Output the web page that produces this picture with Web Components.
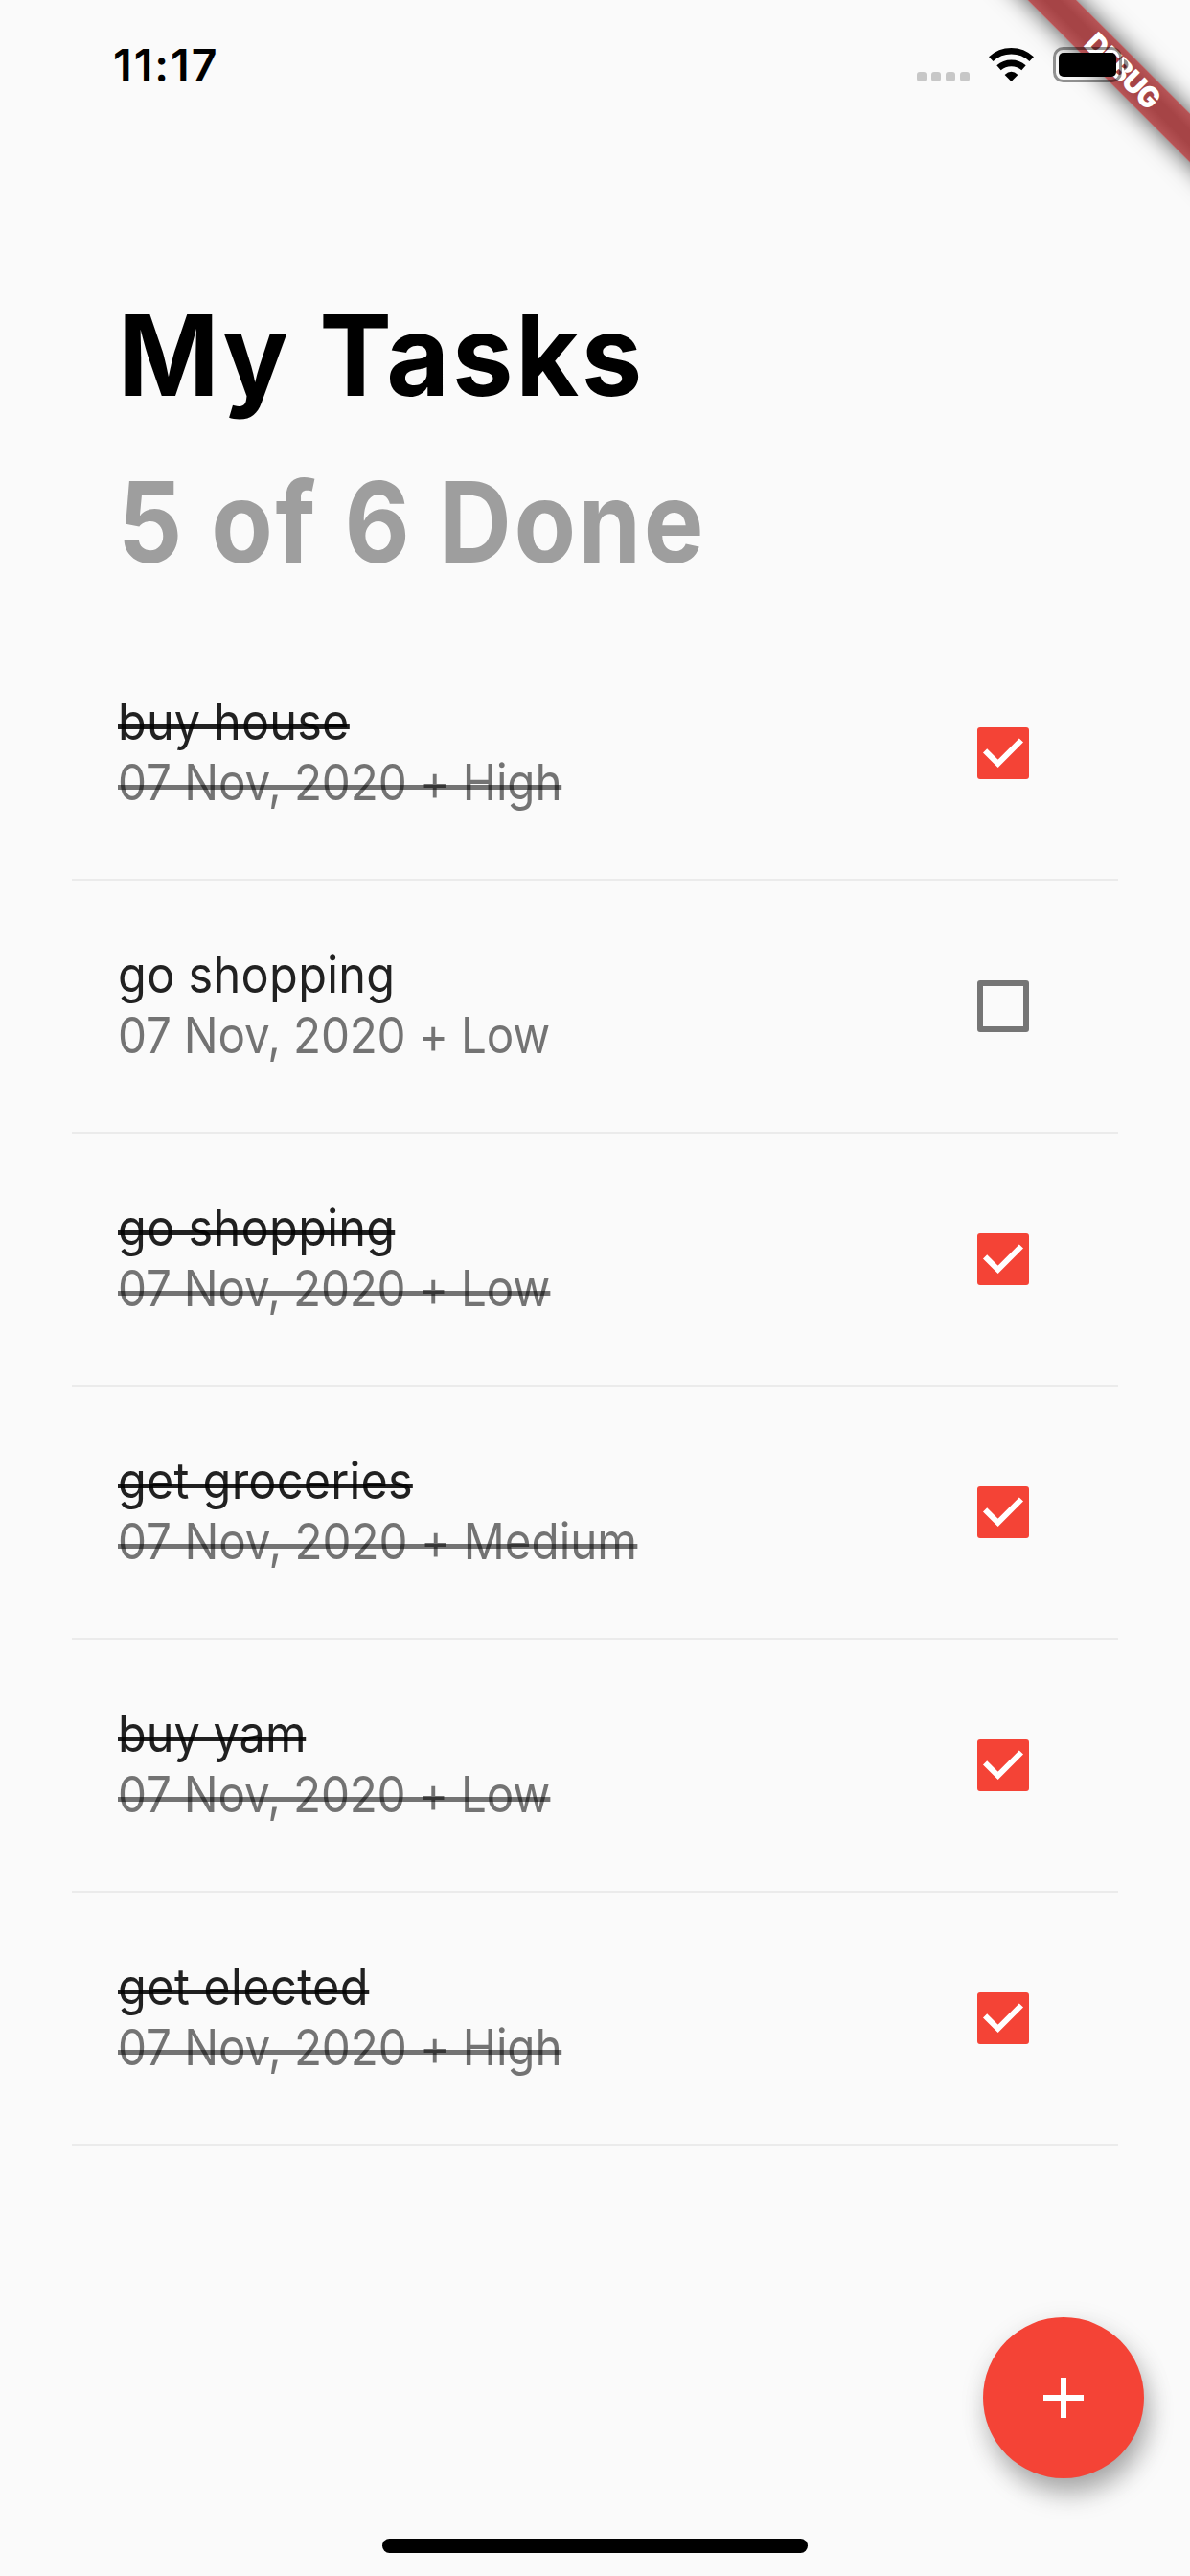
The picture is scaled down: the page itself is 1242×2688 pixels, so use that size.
<!DOCTYPE html>
<html lang="en">
<head>
<meta charset="utf-8">
<title>My Tasks</title>
<style>
html,body{margin:0;padding:0}
body{width:1242px;height:2688px;overflow:hidden;background:#fafafa;font-family:Inter,"Liberation Sans",sans-serif}
</style>
</head>
<body>
<tasks-app></tasks-app>
<script>
const define = (name, html, setup) => {
  const tpl = document.createElement('template');
  tpl.innerHTML = html;
  customElements.define(name, class extends HTMLElement {
    connectedCallback() {
      if (this.shadowRoot) return;
      this.attachShadow({ mode: 'open' }).append(tpl.content.cloneNode(true));
      if (setup) setup.call(this, this.shadowRoot);
    }
  });
};

/* One line of text, condensed by "squeeze" and tracked so that it spans the given advance width. */
define('fit-text', `
<style>
:host{display:block;white-space:nowrap}
span{display:inline-block;vertical-align:top;transform-origin:0 50%}
:host(.row) span{line-height:60px;padding-bottom:3px}
:host([struck]) span{background:linear-gradient(currentColor,currentColor) 0 33px/100% 5px no-repeat}
</style><span><slot></slot></span>`, function (root) {
  const span = root.querySelector('span');
  const squeeze = Number(this.getAttribute('squeeze') || 1);
  const want = Number(this.getAttribute('span')) / squeeze;
  const have = parseFloat(getComputedStyle(span).width);
  span.style.letterSpacing = ((want - have) / this.textContent.length) + 'px';
  if (squeeze !== 1) span.style.transform = 'scaleX(' + squeeze + ')';
});

define('status-bar', `
<style>
:host{display:flex;height:132px;box-sizing:border-box;align-items:flex-start;justify-content:space-between;padding:0 64px 0 118px}
.time{font-size:46.5px;font-weight:600;line-height:56px;padding-top:40px}
.icons{display:flex;padding-top:49px}
svg{display:block}
</style>
<fit-text class="time" span="110.500">11:17</fit-text>
<div class="icons">
<svg width="222" height="38" viewBox="0 0 222 38">
<g fill="#c7c7c7"><rect x="1" y="26" width="10" height="10" rx="3"/><rect x="16" y="26" width="10" height="10" rx="3"/><rect x="31" y="26" width="10" height="10" rx="3"/><rect x="46" y="26" width="10" height="10" rx="3"/></g>
<g fill="none" stroke="#000" stroke-width="6.6"><path d="M78.3 12.600A31 31 0 0 1 120.700 12.600"/><path d="M86.500 21.800A19.500 19.500 0 0 1 112.500 21.800"/></g>
<path d="M92.600 28.900Q99.500 22.700 106.400 28.900L99.500 36Z"/>
<rect x="144.500" y="1.500" width="69" height="34" rx="9" fill="none" stroke="#000" stroke-opacity=".42" stroke-width="3"/>
<path d="M217 12.500Q221.500 14.500 221.500 18.500T217 24.500Z" fill-opacity=".45"/>
<rect x="149" y="6" width="60" height="25" rx="5"/>
</svg></div>`);

define('task-heading', `
<style>
:host{display:block;padding:152px 0 0 123px;font-weight:650;font-size:117px;line-height:174px}
h1,p{margin:0;font:inherit;height:174px}
p{color:#9e9e9e}
</style>
<h1><fit-text span="550" squeeze=".97"></fit-text></h1>
<p><fit-text span="614" squeeze=".9"></fit-text></p>`, function (root) {
  const lines = [this.getAttribute('title-text'), this.getAttribute('summary')];
  root.querySelectorAll('fit-text').forEach((old, i) => {
    const el = document.createElement('fit-text');
    el.setAttribute('span', old.getAttribute('span'));
    el.setAttribute('squeeze', old.getAttribute('squeeze'));
    el.textContent = lines[i];
    old.replaceWith(el);
  });
});

define('check-box', `
<style>
:host{display:block;width:54px;height:54px;box-sizing:border-box;border:6px solid #757575;border-radius:3px}
:host([checked]){background:#f44336;border-color:#f44336}
svg{display:none}
:host([checked]) svg{display:block;margin:-6px;width:54px;height:54px}
</style><svg viewBox="0 0 54 54"><path d="M8.100 24.300L21.600 37.800L45.900 13.500" fill="none" stroke="#fff" stroke-width="6"/></svg>`);

define('task-item', `
<style>
:host{display:flex;align-items:center;justify-content:space-between;height:264px;box-sizing:border-box;border-bottom:2px solid #ebebeb;padding:0 93px 0 48px;font-size:52.300px;line-height:63px}
.name{color:rgba(0,0,0,.87)}
.meta{color:rgba(0,0,0,.54)}
</style>
<div><span class="name"></span><span class="meta"></span></div><check-box></check-box>`, function (root) {
  const put = (cls, text, span) => {
    const el = document.createElement('fit-text');
    el.className = cls + ' row';
    el.textContent = text;
    el.setAttribute('span', span);
    el.setAttribute('squeeze', cls === 'name' ? .93 : .91);
    if (this.hasAttribute('done')) el.setAttribute('struck', '');
    root.querySelector('.' + cls).replaceWith(el);
  };
  put('name', this.getAttribute('name'), this.getAttribute('w'));
  const level = this.getAttribute('level');
  put('meta', '07 Nov, 2020 + ' + level, { High: 463.5, Low: 451, Medium: 542 }[level]);
  if (this.hasAttribute('done')) root.querySelector('check-box').setAttribute('checked', '');
});

define('add-button', `
<style>
:host{position:absolute;left:1026px;top:2418px;width:168px;height:168px;border-radius:50%;background:#f44336;display:grid;place-items:center;
box-shadow:6px 18px 28px -3px rgba(0,0,0,.28),3px 8px 30px rgba(0,0,0,.12)}
</style><svg width="42" height="42"><path d="M21 0V42M0 21H42" stroke="#fff" stroke-width="6"/></svg>`);

define('debug-ribbon', `
<style>
:host{position:absolute;right:0;top:0;width:260px;height:260px;overflow:hidden}
div{position:absolute;left:-11px;top:54.500px;width:400px;height:36px;transform:rotate(45deg);box-sizing:border-box;padding-left:8px;display:flex;justify-content:center;background:linear-gradient(#b75557,#a64446 35%,#a64446 65%,#b75557);box-shadow:0 0 26px rgba(0,0,0,.7);color:#fff;font:900 30.500px/36px Inter,sans-serif}
</style><div><fit-text span="96" squeeze=".95">DEBUG</fit-text></div>`);

define('home-indicator', `
<style>:host{position:absolute;left:399px;top:2649px;width:444px;height:15px;border-radius:8px;background:#000}</style>`);

define('tasks-app', `
<style>
:host{display:block;position:relative;width:1242px;height:2688px;overflow:hidden;background:#fafafa}
status-bar{position:relative;z-index:2}
.list{display:flex;flex-direction:column;padding:23px 75px 0}
</style>
<debug-ribbon></debug-ribbon>
<status-bar></status-bar>
<task-heading title-text="My Tasks" summary="5 of 6 Done"></task-heading>
<div class="list">
<task-item name="buy house" w="241.500" level="High" done></task-item>
<task-item name="go shopping" w="289.500" level="Low"></task-item>
<task-item name="go shopping" w="289.500" level="Low" done></task-item>
<task-item name="get groceries" w="308" level="Medium" done></task-item>
<task-item name="buy yam" w="196.500" level="Low" done></task-item>
<task-item name="get elected" w="262" level="High" done></task-item>
</div>
<add-button></add-button>
<home-indicator></home-indicator>`);
</script>
</body>
</html>
